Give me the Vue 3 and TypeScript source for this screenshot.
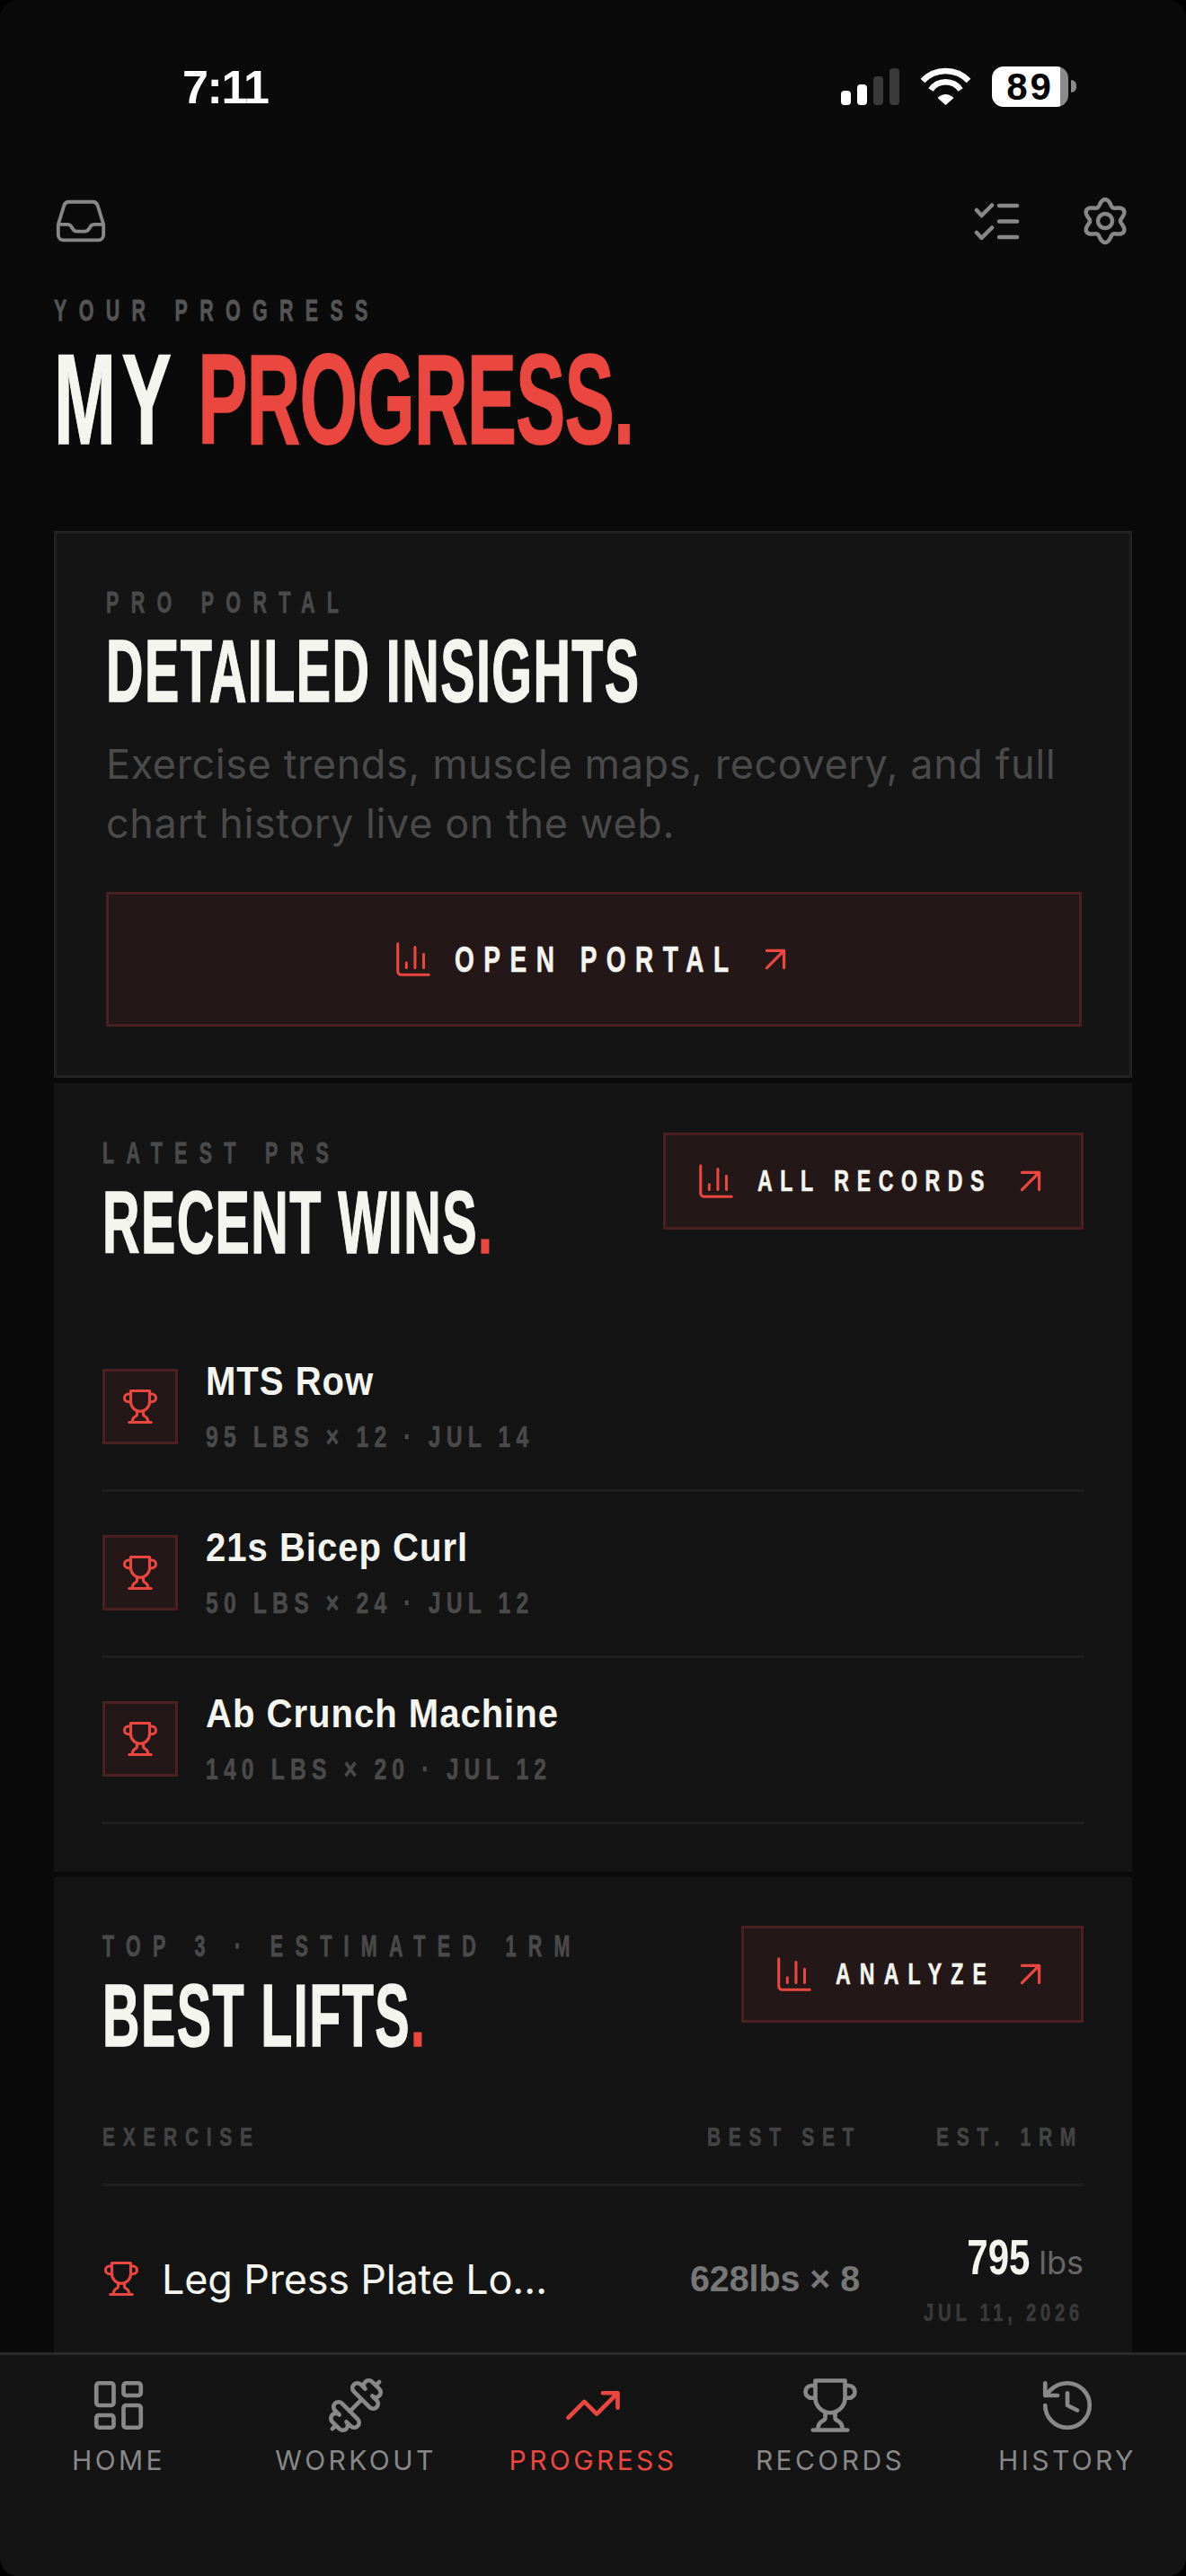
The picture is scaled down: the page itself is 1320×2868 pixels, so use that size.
<script setup lang="ts">
// progress screen - static mock of the tab
type Win = { name: string; sub: string };
type Tab = { label: string; key: string; active?: boolean };

const wins: Win[] = [
  { name: "MTS Row", sub: "95 LBS × 12 · JUL 14" },
  { name: "21s Bicep Curl", sub: "50 LBS × 24 · JUL 12" },
  { name: "Ab Crunch Machine", sub: "140 LBS × 20 · JUL 12" },
];

const tabs: Tab[] = [
  { label: "HOME", key: "home" },
  { label: "WORKOUT", key: "workout" },
  { label: "PROGRESS", key: "progress", active: true },
  { label: "RECORDS", key: "records" },
  { label: "HISTORY", key: "history" },
];

// six-lobed gear outline
const gearPath = (() => {
  const pts: string[] = [];
  for (let i = 0; i < 120; i++) {
    const t = (i / 120) * Math.PI * 2;
    const r = 20.5 + 3.5 * Math.cos(6 * t);
    pts.push(`${(28 + r * Math.sin(t)).toFixed(2)} ${(28 - r * Math.cos(t)).toFixed(2)}`);
  }
  return "M" + pts.join("L") + "Z";
})();
</script>

<template>
  <div class="page">
    <div class="status">
      <span class="time">7:11</span>
      <div class="status-right">
        <div class="signal">
          <i class="b1"></i><i class="b2"></i><i class="b3"></i><i class="b4"></i>
        </div>
        <svg class="wifi" width="57" height="42" viewBox="0 0 57 42" fill="none" stroke="#fff" stroke-width="6.5">
          <path d="M3 15A35 35 0 0 1 54 15" />
          <path d="M12 25A20 20 0 0 1 45 25" />
          <path d="M19.5 34Q28.5 26 37.5 34L28.5 42Z" fill="#fff" stroke="none" />
        </svg>
        <div class="battery"><span>89</span></div>
        <div class="battery-cap"></div>
      </div>
    </div>

    <div class="topbar">
      <svg width="62" height="62" viewBox="0 0 24 24" fill="none" stroke="#888" stroke-width="1.5" stroke-linejoin="round" stroke-linecap="round">
        <path d="M2.25 13.5h3.86a2.25 2.25 0 0 1 2.012 1.244l.256.512a2.25 2.25 0 0 0 2.013 1.244h3.218a2.25 2.25 0 0 0 2.013-1.244l.256-.512a2.25 2.25 0 0 1 2.013-1.244h3.859m-19.5.338V18a2.25 2.25 0 0 0 2.25 2.25h15A2.25 2.25 0 0 0 21.75 18v-4.162c0-.224-.034-.447-.1-.661L19.24 5.338a2.25 2.25 0 0 0-2.15-1.588H6.911a2.25 2.25 0 0 0-2.15 1.588L2.35 13.177a2.25 2.25 0 0 0-.1.661Z" />
      </svg>
      <div class="topbar-right">
        <svg width="52" height="42" viewBox="0 0 52 42" fill="none" stroke="#888" stroke-width="4.5" stroke-linecap="round" stroke-linejoin="round">
          <path d="M3 9l5.5 6L20 3.5" />
          <path d="M3 34l5.5 6L20 28.5" />
          <path d="M28 4h20M28 21.5h20M28 39h20" />
        </svg>
        <svg width="56" height="56" viewBox="0 0 56 56" fill="none" stroke="#888" stroke-width="4.5">
          <path :d="gearPath" />
          <circle cx="28" cy="28" r="8" />
        </svg>
      </div>
    </div>

    <main class="content">
      <div class="hero">
        <div class="eyebrow ey-hero">YOUR PROGRESS</div>
        <h1 class="display h1"><span class="h1-my">MY</span> <span class="red h1-rest">PROGRESS.</span></h1>
      </div>

      <section class="card portal">
        <div class="eyebrow">PRO PORTAL</div>
        <h2 class="display h2">DETAILED INSIGHTS</h2>
        <p class="desc">Exercise trends, muscle maps, recovery, and full chart history live on the web.</p>
        <a class="btn btn-wide">
          <svg class="ico-chart" viewBox="0 0 24 24"><path d="M3 3v16a2 2 0 0 0 2 2h16M8 17v-3M13 17V5M18 17V9" /></svg>
          <span class="btn-text t-open">OPEN PORTAL</span>
          <svg class="ico-arrow" viewBox="0 0 24 24"><path d="M7 7h10v10M7 17 17 7" /></svg>
        </a>
      </section>

      <section class="card wins">
        <div class="card-head">
          <div class="head-left">
            <div class="eyebrow">LATEST PRS</div>
            <h2 class="display h2">RECENT WINS<span class="red">.</span></h2>
          </div>
          <a class="btn">
            <svg class="ico-chart" viewBox="0 0 24 24"><path d="M3 3v16a2 2 0 0 0 2 2h16M8 17v-3M13 17V5M18 17V9" /></svg>
            <span class="btn-text t-records">ALL RECORDS</span>
            <svg class="ico-arrow" viewBox="0 0 24 24"><path d="M7 7h10v10M7 17 17 7" /></svg>
          </a>
        </div>
        <div class="win-list">
          <div v-for="w in wins" :key="w.name" class="win">
            <div class="win-ico">
              <svg class="trophy" width="42" height="42" viewBox="0 0 24 24">
                <path d="M6 9H4.5a2.5 2.5 0 0 1 0-5H6M18 9h1.5a2.5 2.5 0 0 0 0-5H18M5 22h14M10 14.66V17c0 .55-.47.98-.97 1.21C7.85 18.75 7 20.24 7 22M14 14.66V17c0 .55.47.98.97 1.21C16.15 18.75 17 20.24 17 22M18 2H6v7a6 6 0 0 0 12 0V2Z" />
              </svg>
            </div>
            <div class="win-body">
              <div class="win-name">{{ w.name }}</div>
              <div class="win-sub">{{ w.sub }}</div>
            </div>
          </div>
        </div>
      </section>

      <section class="card lifts">
        <div class="card-head">
          <div class="head-left">
            <div class="eyebrow">TOP 3 · ESTIMATED 1RM</div>
            <h2 class="display h2">BEST LIFTS<span class="red">.</span></h2>
          </div>
          <a class="btn">
            <svg class="ico-chart" viewBox="0 0 24 24"><path d="M3 3v16a2 2 0 0 0 2 2h16M8 17v-3M13 17V5M18 17V9" /></svg>
            <span class="btn-text t-analyze">ANALYZE</span>
            <svg class="ico-arrow" viewBox="0 0 24 24"><path d="M7 7h10v10M7 17 17 7" /></svg>
          </a>
        </div>
        <div class="table-head">
          <span>EXERCISE</span>
          <span>BEST SET</span>
          <span>EST. 1RM</span>
        </div>
        <div class="lift">
          <svg class="trophy" width="42" height="42" viewBox="0 0 24 24">
            <path d="M6 9H4.5a2.5 2.5 0 0 1 0-5H6M18 9h1.5a2.5 2.5 0 0 0 0-5H18M5 22h14M10 14.66V17c0 .55-.47.98-.97 1.21C7.85 18.75 7 20.24 7 22M14 14.66V17c0 .55.47.98.97 1.21C16.15 18.75 17 20.24 17 22M18 2H6v7a6 6 0 0 0 12 0V2Z" />
          </svg>
          <span class="lift-name">Leg Press Plate Lo…</span>
          <span class="lift-set">628lbs × 8</span>
          <div class="lift-rm">
            <div class="rm-value"><b>795</b><span>lbs</span></div>
            <div class="rm-date">JUL 11, 2026</div>
          </div>
        </div>
      </section>
    </main>

    <nav class="tabbar">
      <div v-for="t in tabs" :key="t.key" class="tab" :class="{ active: t.active }">
        <svg width="66" height="66" viewBox="0 0 24 24" class="tab-ico">
          <template v-if="t.key === 'home'">
            <rect x="3" y="3" width="7" height="9" rx="1" />
            <rect x="14" y="3" width="7" height="5" rx="1" />
            <rect x="14" y="12" width="7" height="9" rx="1" />
            <rect x="3" y="16" width="7" height="5" rx="1" />
          </template>
          <g v-else-if="t.key === 'workout'" transform="translate(24 0) scale(-1 1)">
            <path d="M14.4 14.4 9.6 9.6M18.657 21.485a2 2 0 1 1-2.829-2.828l-1.767 1.768a2 2 0 1 1-2.829-2.829l6.364-6.364a2 2 0 1 1 2.829 2.829l-1.768 1.767a2 2 0 1 1 2.828 2.829zM21.5 21.5l-1.4-1.4M3.9 3.9 2.5 2.5M6.404 12.768a2 2 0 1 1-2.829-2.829l1.768-1.767a2 2 0 1 1-2.828-2.829l2.828-2.828a2 2 0 1 1 2.829 2.828l1.767-1.768a2 2 0 1 1 2.829 2.829z" />
          </g>
          <template v-else-if="t.key === 'progress'">
            <path d="M22 7l-8.5 8.5-5-5L2 17M16 7h6v6" />
          </template>
          <template v-else-if="t.key === 'records'">
            <path d="M6 9H4.5a2.5 2.5 0 0 1 0-5H6M18 9h1.5a2.5 2.5 0 0 0 0-5H18M5 22h14M10 14.66V17c0 .55-.47.98-.97 1.21C7.85 18.75 7 20.24 7 22M14 14.66V17c0 .55.47.98.97 1.21C16.15 18.75 17 20.24 17 22M18 2H6v7a6 6 0 0 0 12 0V2Z" />
          </template>
          <template v-else>
            <path d="M3 12a9 9 0 1 0 9-9 9.75 9.75 0 0 0-6.74 2.74L3 8M3 3v5h5M12 7v5l4 2" />
          </template>
        </svg>
        <span class="tab-label">{{ t.label }}</span>
      </div>
    </nav>
  </div>
</template>

<style>
html,
body {
  margin: 0;
  background: #000;
}
</style>

<style scoped>
.page {
  width: 1320px;
  height: 2868px;
  background: #0a0a0a;
  display: flex;
  flex-direction: column;
  overflow: hidden;
  border-radius: 20px;
  font-family: "Inter", "Liberation Sans", sans-serif;
  color: #f5f5f0;
}

/* status bar */
.status {
  height: 190px;
  flex-shrink: 0;
  display: flex;
  justify-content: space-between;
  box-sizing: border-box;
  padding: 74px 122px 0 203px;
}
.time {
  font-family: "Liberation Sans", sans-serif;
  font-weight: 700;
  font-size: 52px;
  line-height: 46px;
  letter-spacing: -1.4px;
  color: #fff;
}
.status-right {
  display: flex;
  align-items: flex-start;
}
.signal {
  display: flex;
  align-items: flex-end;
  gap: 7px;
  height: 43px;
}
.signal i {
  display: block;
  width: 11px;
  border-radius: 4px;
  background: #fff;
}
.signal .b1 { height: 16px; }
.signal .b2 { height: 23px; }
.signal .b3 { height: 32px; background: #3a3a3a; }
.signal .b4 { height: 41px; background: #3a3a3a; }
.wifi {
  margin-left: 23px;
  margin-top: 1px;
}
.battery {
  margin-left: 23px;
  width: 85px;
  height: 45px;
  box-sizing: border-box;
  border-radius: 13px;
  background: linear-gradient(90deg, #fff 90%, #8a8a8a 90%);
  display: flex;
  align-items: center;
  justify-content: center;
  color: #000;
  font-family: "Liberation Sans", sans-serif;
  font-weight: 700;
  font-size: 42px;
  letter-spacing: 3px;
}
.battery-cap {
  width: 6px;
  height: 14px;
  margin: 15px 0 0 3px;
  border-radius: 0 6px 6px 0;
  background: #8a8a8a;
}

/* top icons */
.topbar {
  flex-shrink: 0;
  height: 66px;
  margin-top: 23px;
  padding: 0 62px 0 59px;
  display: flex;
  justify-content: space-between;
  align-items: center;
}
.topbar-right {
  display: flex;
  align-items: center;
  gap: 66px;
}

.content {
  flex: 1;
  min-height: 0;
  overflow: hidden;
  padding: 0 60px;
}

.hero {
  padding-top: 52px;
  height: 312px;
  box-sizing: border-box;
}

/* no condensed family is installed, so the tall labels are narrowed by hand */
.eyebrow {
  font-family: "Liberation Sans", sans-serif;
  font-weight: 700;
  font-size: 33px;
  line-height: 30px;
  letter-spacing: 20.5px;
  color: #4a4a4a;
  white-space: nowrap;
  transform-origin: left center;
  transform: scaleX(0.65);
  -webkit-text-stroke: 0.8px currentColor;
}
.ey-hero {
  color: #555;
}

.display {
  margin: 0;
  font-family: "Liberation Sans", sans-serif;
  font-weight: 700;
  white-space: nowrap;
  transform-origin: left center;
  color: #f5f5f0;
  -webkit-text-stroke: 1.5px currentColor;
}
.h1 {
  font-size: 143px;
  line-height: 122px;
  margin-top: 23px;
  transform: scaleX(0.58);
}
.h1-my {
  letter-spacing: 11px;
}
.h1-rest {
  letter-spacing: -1.6px;
}
.h2 {
  font-size: 99px;
  line-height: 86px;
  letter-spacing: 2.5px;
  margin-top: 18px;
  transform: scaleX(0.58);
}
.red {
  color: #ea4740;
}

.card {
  background: #141414;
  box-sizing: border-box;
}

.portal {
  height: 609px;
  border: 3px solid #222;
  padding: 62px 55px 0;
}
.desc {
  margin: 28px 0 0;
  width: 1090px;
  font-size: 45px;
  letter-spacing: 0.6px;
  line-height: 66px;
  color: #4a4a4a;
}
.btn {
  display: flex;
  align-items: center;
  box-sizing: border-box;
  height: 108px;
  padding: 0 33px;
  background: #241717;
  border: 3px solid #4a2020;
  gap: 23px;
  flex-shrink: 0;
}
.btn-wide {
  height: 150px;
  margin-top: 43px;
  width: 1086px;
  justify-content: center;
  padding: 0;
}
.btn-text {
  font-family: "Liberation Sans", sans-serif;
  font-weight: 700;
  font-size: 33px;
  letter-spacing: 12.3px;
  color: #f5f5f0;
  white-space: nowrap;
  transform-origin: left center;
  transform: scaleX(0.7);
  -webkit-text-stroke: 0.6px currentColor;
}
.t-records {
  width: 257px;
}
.t-analyze {
  width: 170px;
  letter-spacing: 14.5px;
}
.t-open {
  width: 308px;
  font-size: 40px;
  letter-spacing: 15px;
}
.ico-chart {
  width: 46px;
  height: 46px;
  flex-shrink: 0;
  fill: none;
  stroke: #ea4740;
  stroke-width: 1.6;
  stroke-linecap: round;
}
.ico-arrow {
  width: 46px;
  height: 46px;
  flex-shrink: 0;
  margin-left: 1px;
  fill: none;
  stroke: #ea4740;
  stroke-width: 1.7;
  stroke-linecap: round;
  stroke-linejoin: round;
}
.btn-wide .ico-arrow {
  margin-left: 3px;
}

.wins {
  margin-top: 6px;
  height: 878px;
  padding: 55px 54px 0;
}
.card-head {
  display: flex;
  justify-content: space-between;
  align-items: flex-start;
}
.head-left {
  flex: 1;
  min-width: 0;
  padding-top: 8px;
}
.head-left .h2 {
  margin-top: 19px;
}
.win-list {
  margin-top: 72px;
}
.win {
  display: flex;
  gap: 31px;
  height: 185px;
  box-sizing: border-box;
  padding-top: 48px;
  border-bottom: 3px solid #1f1f1f;
}
.win-ico {
  width: 84px;
  height: 84px;
  box-sizing: border-box;
  background: #241717;
  border: 3px solid #4a2020;
  display: flex;
  align-items: center;
  justify-content: center;
}
.trophy {
  flex-shrink: 0;
  fill: none;
  stroke: #ea4740;
  stroke-width: 1.8;
  stroke-linecap: round;
  stroke-linejoin: round;
}
.win-name {
  font-family: "Liberation Sans", sans-serif;
  font-weight: 700;
  font-size: 44px;
  line-height: 46px;
  letter-spacing: 1.1px;
  color: #f5f5f0;
  margin-top: -9px;
  white-space: nowrap;
  transform-origin: left center;
  transform: scaleX(0.91);
}
.win-sub {
  font-family: "Liberation Sans", sans-serif;
  font-weight: 700;
  font-size: 33px;
  line-height: 34px;
  letter-spacing: 8.2px;
  color: #4a4a4a;
  margin-top: 22px;
  white-space: nowrap;
  transform-origin: left center;
  transform: scaleX(0.75);
  -webkit-text-stroke: 0.6px currentColor;
}

.lifts {
  margin-top: 6px;
  height: 600px;
  padding: 54px 54px 0;
}
.table-head {
  margin-top: 77px;
  display: grid;
  grid-template-columns: 673px 255px 1fr;
  padding-bottom: 37px;
  border-bottom: 3px solid #1f1f1f;
}
.table-head span {
  font-family: "Liberation Sans", sans-serif;
  font-weight: 700;
  font-size: 30px;
  line-height: 30px;
  letter-spacing: 12.4px;
  color: #444;
  white-space: nowrap;
  transform-origin: left center;
  transform: scaleX(0.7);
  -webkit-text-stroke: 0.6px currentColor;
}
.lift {
  display: flex;
  align-items: center;
  height: 206px;
}
.lift-name {
  margin-left: 24px;
  flex: 1;
  font-size: 45px;
  letter-spacing: -0.2px;
  color: #f5f5f0;
  white-space: nowrap;
}
.lift-set {
  font-family: "Liberation Sans", sans-serif;
  font-weight: 700;
  font-size: 41px;
  color: #777;
  white-space: nowrap;
  transform-origin: right center;
  transform: scaleX(0.96);
}
.lift-rm {
  width: 249px;
  flex-shrink: 0;
  text-align: right;
}
.rm-value {
  display: flex;
  justify-content: flex-end;
  align-items: baseline;
  gap: 10px;
}
.rm-value b {
  font-family: "Liberation Sans", sans-serif;
  font-size: 56px;
  line-height: 56px;
  color: #f5f5f0;
  transform-origin: right center;
  transform: scaleX(0.75);
  display: inline-block;
  margin-left: -30px;
}
.rm-value span {
  font-size: 36px;
  color: #666;
}
.rm-date {
  margin-top: 19px;
  font-family: "Liberation Sans", sans-serif;
  font-weight: 700;
  font-size: 27px;
  line-height: 30px;
  letter-spacing: 6.3px;
  color: #3a3a3a;
  white-space: nowrap;
  transform-origin: right center;
  transform: scaleX(0.75);
  -webkit-text-stroke: 0.5px currentColor;
}

/* bottom tabs */
.tabbar {
  flex-shrink: 0;
  height: 249px;
  box-sizing: border-box;
  border-top: 3px solid #2a2a2a;
  background: #141414;
  display: grid;
  grid-template-columns: repeat(5, 1fr);
  padding-top: 23px;
}
.tab {
  display: flex;
  flex-direction: column;
  align-items: center;
}
.tab-ico {
  fill: none;
  stroke: #888;
  stroke-width: 1.7;
  stroke-linecap: round;
  stroke-linejoin: round;
}
.tab-label {
  margin-top: 10px;
  font-size: 30px;
  line-height: 36px;
  letter-spacing: 3.4px;
  color: #888;
}
.tab.active .tab-ico {
  stroke: #ea4740;
}
.tab.active .tab-label {
  color: #ea4740;
}
</style>
